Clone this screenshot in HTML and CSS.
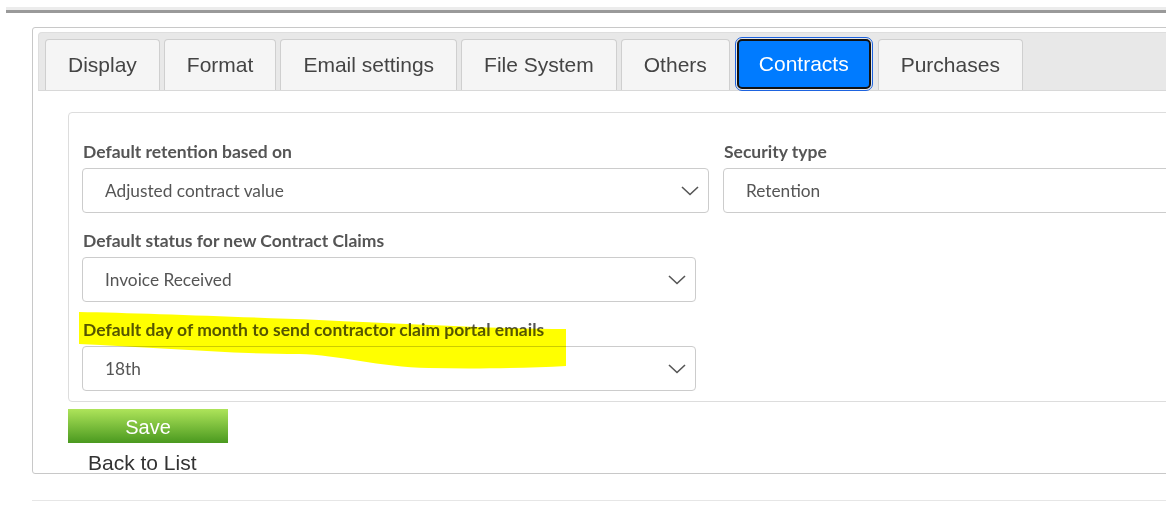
FILE: index.html
```html
<!DOCTYPE html>
<html lang="en">
<head>
    <meta charset="UTF-8">
    <meta name="viewport" content="width=device-width, initial-scale=1.0">
    <title>Settings</title>
    <link rel="stylesheet" href="styles.css">
</head>
<body>

    <div class="top-rule"></div>

    <div class="panel">
        <div class="tab-bar">
            <div class="tab">Display</div>
            <div class="tab">Format</div>
            <div class="tab">Email settings</div>
            <div class="tab">File System</div>
            <div class="tab">Others</div>
            <div class="tab active">Contracts</div>
            <div class="tab">Purchases</div>
        </div>

        <div class="panel-body">
            <div class="settings-card">
                <div class="row">
                    <div class="field wide">
                        <label>Default retention based on</label>
                        <div class="select">
                            <span>Adjusted contract value</span>
                            <svg class="chevron" width="18" height="10" viewBox="0 0 18 10"><path d="M1 1 L9 8.5 L17 1" fill="none" stroke="#555" stroke-width="1.6"/></svg>
                        </div>
                    </div>
                    <div class="field wide">
                        <label>Security type</label>
                        <div class="select">
                            <span>Retention</span>
                        </div>
                    </div>
                </div>

                <div class="field">
                    <label>Default status for new Contract Claims</label>
                    <div class="select">
                        <span>Invoice Received</span>
                        <svg class="chevron" width="18" height="10" viewBox="0 0 18 10"><path d="M1 1 L9 8.5 L17 1" fill="none" stroke="#555" stroke-width="1.6"/></svg>
                    </div>
                </div>

                <div class="field">
                    <label>Default day of month to send contractor claim portal emails</label>
                    <div class="select">
                        <span>18th</span>
                        <svg class="chevron" width="18" height="10" viewBox="0 0 18 10"><path d="M1 1 L9 8.5 L17 1" fill="none" stroke="#555" stroke-width="1.6"/></svg>
                    </div>
                </div>

                <!-- highlighter mark drawn over the screenshot -->
                <svg class="highlight" width="500" height="60" viewBox="0 0 500 60">
                    <path d="M0 0 C60 1 160 5 240 8 C330 12 420 17 487 17 L487 54 C450 56 400 57 350 56 C300 55 260 43 220 42 C150 42 70 35 0 32 Z" fill="#ffff00"/>
                </svg>
            </div>

            <button type="button" class="save-btn">Save</button>
            <a class="back-link">Back to List</a>
        </div>
    </div>

    <div class="bottom-rule"></div>

</body>
</html>
```

FILE: styles.css
```css
html, body {
    overflow: hidden;
}
body {
    margin: 0;
    background-color: #ffffff;
    font-family: "Liberation Sans", Arial, sans-serif;
    color: #333;
}
.top-rule {
    margin: 7px 0 0 6px;
    height: 3px;
    background-color: #ececec;
    border-bottom: 3px solid #9a9a9a;
}
.panel {
    margin: 14px 0 0 32px;
    width: 1220px;
    border: 1px solid #c8c8c8;
    border-radius: 3px;
    padding: 4px 0 0 5px;
}
.tab-bar {
    display: flex;
    gap: 4px;
    padding: 6px 0 0 6px;
    height: 51px;
    background-color: #e8e8e8;
    border: 1px solid #dedede;
    border-bottom: 1px solid #d8d8d8;
    border-radius: 4px 0 0 0;
}
.tab {
    padding: 0 22px;
    line-height: 50px;
    font-size: 21px;
    color: #444;
    background-color: #f5f5f5;
    border: 1px solid #cfcfcf;
    border-bottom: none;
    border-radius: 4px 4px 0 0;
}
.tab.active {
    margin-left: 3px;
    margin-right: 3px;
    padding: 0 20px;
    line-height: 46px;
    background-color: #007bff;
    color: #ffffff;
    border: 2px solid #111;
    border-radius: 5px;
    outline: 1px solid #1d63e0;
    outline-offset: 1px;
    height: 46px;
}
.panel-body {
    padding: 21px 0 0 30px;
}
.settings-card {
    position: relative;
    width: 1300px;
    border: 1px solid #dddddd;
    border-radius: 4px;
    padding: 29px 0 10px 13px;
    font-family: Lato, "Open Sans", sans-serif;
}
.row {
    display: flex;
    gap: 14px;
}
.field {
    width: 614px;
    margin-bottom: 18px;
}
.field:last-of-type {
    margin-bottom: 0;
}
.field.wide {
    width: 627px;
}
.row .field {
    margin-bottom: 18px;
}
.field label {
    display: block;
    padding-left: 1px;
    margin-bottom: 6px;
    font-size: 17.5px;
    line-height: 20px;
    font-weight: bold;
    color: #555;
}
.select {
    display: flex;
    align-items: center;
    justify-content: space-between;
    height: 43px;
    padding: 0 9px 0 22px;
    border: 1px solid #cccccc;
    border-radius: 4px;
    background-color: #ffffff;
    font-size: 17.3px;
    color: #555;
}
.highlight {
    position: absolute;
    left: 10px;
    top: 199px;
    mix-blend-mode: multiply;
    pointer-events: none;
}
.save-btn {
    display: block;
    margin-top: 7px;
    width: 160px;
    height: 34px;
    border: none;
    padding: 0;
    background: linear-gradient(#aee45a, #4a991f);
    color: #ffffff;
    font-family: "Liberation Sans", Arial, sans-serif;
    font-size: 20px;
    line-height: 36px;
    cursor: pointer;
}
.back-link {
    display: block;
    margin: 9px 0 0 20px;
    font-size: 21px;
    line-height: 21px;
    color: #333;
}
.bottom-rule {
    margin: 26px 0 0 32px;
    height: 1px;
    background-color: #e6e6e6;
}
```
